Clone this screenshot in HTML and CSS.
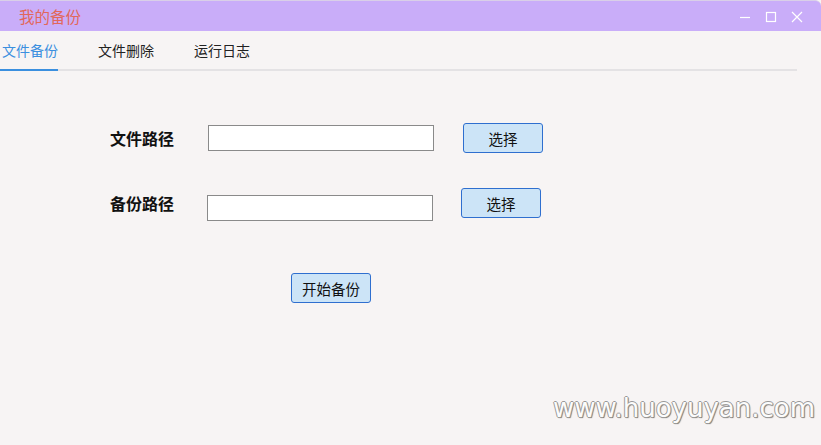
FILE: index.html
```html
<!DOCTYPE html>
<html lang="zh">
<head>
<meta charset="utf-8">
<title>我的备份</title>
<link rel="stylesheet" href="styles.css">
</head>
<body>
<div class="window">
  <div class="titlebar">
    <span class="title">我的备份</span>
    <div class="controls">
      <svg class="ctl" width="12" height="12" viewBox="0 0 12 12"><path d="M1 6.5H11" stroke="#fff" stroke-width="1.2" fill="none"/></svg>
      <svg class="ctl" width="12" height="12" viewBox="0 0 12 12"><rect x="1.5" y="1.5" width="9" height="9" stroke="#fff" stroke-width="1.2" fill="none"/></svg>
      <svg class="ctl" width="12" height="12" viewBox="0 0 12 12"><path d="M1 1L11 11M11 1L1 11" stroke="#fff" stroke-width="1.2" fill="none"/></svg>
    </div>
  </div>
  <div class="tabs">
    <div class="tab active">文件备份</div>
    <div class="tab">文件删除</div>
    <div class="tab">运行日志</div>
  </div>
  <div class="content">
    <div class="row row1">
      <label class="label">文件路径</label>
      <input class="field" type="text">
      <button class="btn">选择</button>
    </div>
    <div class="row row2">
      <label class="label">备份路径</label>
      <input class="field" type="text">
      <button class="btn">选择</button>
    </div>
    <div class="start-row">
      <button class="btn">开始备份</button>
    </div>
  </div>
  <div class="watermark">www.huoyuyan.com</div>
</div>
</body>
</html>
```

FILE: styles.css
```css
* { box-sizing: border-box; }
html, body {
  margin: 0;
  padding: 0;
  width: 821px;
  height: 445px;
  overflow: hidden;
  background: #f7f4f4;
  font-family: "Noto Sans CJK SC", "Noto Sans", sans-serif;
}
.window {
  position: relative;
  width: 821px;
  height: 445px;
  background: #f7f4f4;
}
.titlebar {
  height: 31px;
  background: #c9adf9;
  border-top: 1px solid #d9cfe8;
  border-top-right-radius: 6px;
  display: flex;
  align-items: center;
  justify-content: space-between;
  padding-left: 19px;
  padding-right: 18px;
}
.title {
  color: #e2675b;
  font-size: 15.5px;
  line-height: 1;
  margin-top: 1px;
}
.controls {
  display: flex;
  gap: 14px;
  align-items: center;
  margin-top: 1px;
}
.ctl { display: block; }
.tabs {
  width: 797px;
  height: 40px;
  display: flex;
  border-bottom: 2px solid #e4e2e4;
}
.tab {
  font-size: 14px;
  color: #222;
  line-height: 38px;
  padding: 0 2px;
  margin-right: 36px;
  height: 40px;
}
.tab.active {
  color: #3b8fdf;
  border-bottom: 2px solid #3b8fdf;
  margin-bottom: -2px;
  padding-left: 2px;
  padding-right: 0;
  margin-right: 38px;
}
.content {
  padding-top: 52px;
  padding-left: 110px;
}
.row {
  display: flex;
  align-items: center;
  height: 30px;
}
.row2 {
  margin-top: 35px;
}
.label {
  width: 98px;
  font-size: 16px;
  font-weight: bold;
  color: #111;
}
.field {
  width: 226px;
  height: 26px;
  border: 1px solid #8a8a8a;
  background: #fff;
  margin: 0 29px 0 0;
  padding: 0 4px;
  outline: none;
}
.row2 .field { margin-top: 9px; margin-left: -1px; }
.btn {
  width: 80px;
  height: 30px;
  background: #cce4f7;
  border: 1px solid #2f6fcf;
  border-radius: 3px;
  font-family: "Noto Sans CJK SC", sans-serif;
  font-size: 14.5px;
  color: #111;
  padding: 0;
}
.row2 .btn { margin-left: -1px; }
.start-row {
  margin-top: 55px;
  padding-left: 181px;
}
.watermark {
  position: absolute;
  right: 6px;
  bottom: 22px;
  font-family: "DejaVu Sans", sans-serif;
  font-size: 26px;
  color: #fcfcfc;
  text-shadow: -1px 0 0 #999, 1px 0 0 #999, 0 -1px 0 #999, 0 1px 0 #999, 1px 1px 1px #666;
}
```
